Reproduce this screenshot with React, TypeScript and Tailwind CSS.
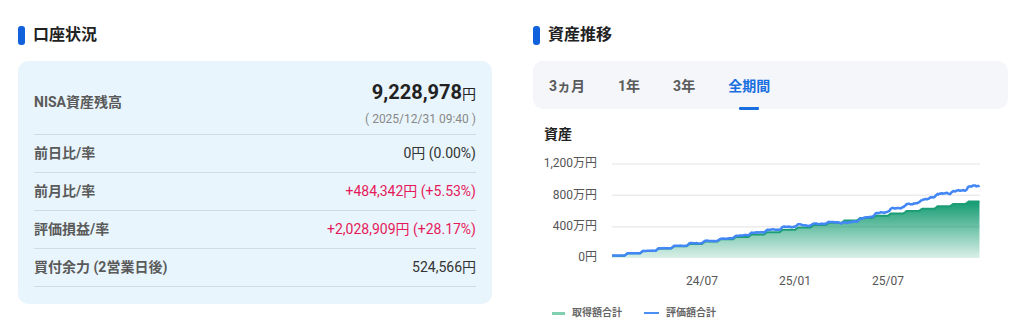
const rows = [
  { label: "前日比/率", value: "0円 (0.00%)", up: false },
  { label: "前月比/率", value: "+484,342円 (+5.53%)", up: true },
  { label: "評価損益/率", value: "+2,028,909円 (+28.17%)", up: true },
  { label: "買付余力 (2営業日後)", value: "524,566円", up: false }
];

const tabs = ["3ヵ月", "1年", "3年", "全期間"];

// chart coords: svg origin sits at page (533,150)
const X0 = 76;
const PX = 15.5;
const xt = (t: number) => X0 + t * PX;
const yv = (v: number) => 108 - v * 0.07833;

const retKeys: [number, number][] = [
  [0.2, 0.0],
  [3, 0.03],
  [6, 0.05],
  [7.2, 0.025],
  [9, 0.08],
  [12, 0.11],
  [13, 0.05],
  [14.5, 0.025],
  [15.4, -0.06],
  [16.3, -0.01],
  [17, 0.04],
  [18, 0.095],
  [20.1, 0.176],
  [21.3, 0.25],
  [22.5, 0.24],
  [24, 0.29]
];

function cost(t: number) {
  let n = 0;
  for (let k = 0; k < 24; k++) n += Math.min(1, Math.max(0, (t - k) / 0.2));
  return 30 * n;
}

function ret(t: number) {
  let r = 0;
  for (let i = 0; i < retKeys.length - 1; i++) {
    const [a, ra] = retKeys[i];
    const [b, rb] = retKeys[i + 1];
    if (t >= a && t <= b) {
      r = ra + ((t - a) / (b - a)) * (rb - ra);
      break;
    }
  }
  return r + 0.008 * Math.sin(t * 7.3) + 0.006 * Math.sin(t * 17.9 + 1) + 0.004 * Math.sin(t * 41.3);
}

const samples: number[] = [];
for (let t = 0.2; t <= 23.95; t += 0.05) samples.push(t);

const costPts = samples.map((t) => `${xt(t).toFixed(1)},${yv(cost(t)).toFixed(1)}`);
const valuePts = samples.map((t) => `${xt(t).toFixed(1)},${yv(cost(t) * (1 + ret(t))).toFixed(1)}`);
const lastX = xt(samples[samples.length - 1]).toFixed(1);
const firstX = xt(samples[0]).toFixed(1);
const costLine = "M" + costPts.join(" L");
const costArea = `${costLine} L${lastX},108 L${firstX},108 Z`;
const valueLine = "M" + valuePts.join(" L");

function Heading({ children }: { children: string }) {
  return (
    <h2 className="flex h-[20px] items-center gap-[8px] text-[16px] font-bold text-[#222]">
      <span className="h-[19px] w-[7px] rounded-[3px] bg-[#1160dc]" />
      {children}
    </h2>
  );
}

function AssetChart() {
  const grid = [
    { v: 1200, label: "1,200万円" },
    { v: 800, label: "800万円" },
    { v: 400, label: "400万円" },
    { v: 0, label: "0円" }
  ];
  const ticks = [
    { x: 169, label: "24/07" },
    { x: 262, label: "25/01" },
    { x: 355, label: "25/07" }
  ];
  return (
    <svg width="475" height="150" viewBox="0 0 475 150" className="mt-[6px] block">
      <defs>
        <linearGradient id="costFill" x1="0" y1="0" x2="0" y2="1">
          <stop offset="0%" stopColor="#079669" stopOpacity="0.95" />
          <stop offset="100%" stopColor="#079669" stopOpacity="0.15" />
        </linearGradient>
      </defs>
      {grid.map((g) => (
        <g key={g.v}>
          {g.v > 0 && <line x1="79" x2="447" y1={yv(g.v)} y2={yv(g.v)} stroke="#ececec" strokeWidth="1.5" />}
          <text x="64" y={yv(g.v)} textAnchor="end" dominantBaseline="middle" fontSize="12" fill="#555">
            {g.label}
          </text>
        </g>
      ))}
      <path d={costArea} fill="url(#costFill)" />
      <path d={costLine} fill="none" stroke="#1b9e75" strokeWidth="2" />
      <path d={valueLine} fill="none" stroke="#4287f5" strokeWidth="2.5" strokeLinejoin="round" />
      {ticks.map((t) => (
        <text key={t.label} x={t.x} y="132" textAnchor="middle" dominantBaseline="middle" fontSize="12" fill="#555">
          {t.label}
        </text>
      ))}
    </svg>
  );
}

export default function App() {
  return (
    <div className="flex gap-[41px] bg-white pl-[18px] pt-[25px] font-[Roboto,'Noto_Sans_CJK_JP',sans-serif]">
      <section className="w-[474px] shrink-0">
        <Heading>口座状況</Heading>
        <div className="mt-[16px] rounded-[10px] bg-[#e8f5fc] px-4 pt-4 pb-[17px]">
          <div className="flex h-[58px] items-center justify-between border-b border-[#cfdbe6] pb-[6px]">
            <span className="text-[14px] font-bold text-[#5a5a5a]">NISA資産残高</span>
            <div className="flex flex-col items-end">
              <p className="text-[20px] leading-[28px] font-bold text-[#222]">
                9,228,978<span className="text-[14px] font-normal">円</span>
              </p>
              <p className="mt-[3px] text-[12px] leading-[16px] text-[#888]">( 2025/12/31 09:40 )</p>
            </div>
          </div>
          {rows.map((r) => (
            <div key={r.label} className="flex h-[38px] items-center justify-between border-b border-[#cfdbe6]">
              <span className="text-[14px] font-bold text-[#5a5a5a]">{r.label}</span>
              <span className={r.up ? "text-[14px] text-[#e6195a]" : "text-[14px] text-[#333]"}>{r.value}</span>
            </div>
          ))}
        </div>
      </section>

      <section className="w-[475px] shrink-0">
        <Heading>資産推移</Heading>
        <div className="mt-[16px] flex h-[48px] items-center gap-[33px] rounded-[10px] bg-[#f4f6fa] pl-4">
          {tabs.map((t) => {
            const active = t === "全期間";
            return (
              <button
                key={t}
                type="button"
                className={
                  active
                    ? "relative flex h-full items-center pt-[2px] text-[14px] font-bold text-[#1a6fe0]"
                    : "relative flex h-full items-center pt-[2px] text-[14px] font-bold text-[#5a5a5a]"
                }
              >
                {t}
                {active && (
                  <span className="absolute bottom-[-1px] left-1/2 h-[3px] w-[20px] -translate-x-1/2 rounded-[1px] bg-[#1a6fe0]" />
                )}
              </button>
            );
          })}
        </div>
        <p className="mt-[15px] pl-[11px] text-[14px] leading-[20px] font-bold text-[#222]">資産</p>
        <AssetChart />
        <div className="mt-[6px] flex items-center pl-[19px] text-[10px] leading-[14px] font-bold text-[#666]">
          <span className="h-[3px] w-[13px] bg-[#7fcfb0]" />
          <span className="ml-[7px]">取得額合計</span>
          <span className="ml-[22px] h-[2px] w-[15px] bg-[#4d8ef5]" />
          <span className="ml-[7px]">評価額合計</span>
        </div>
      </section>
    </div>
  );
}
